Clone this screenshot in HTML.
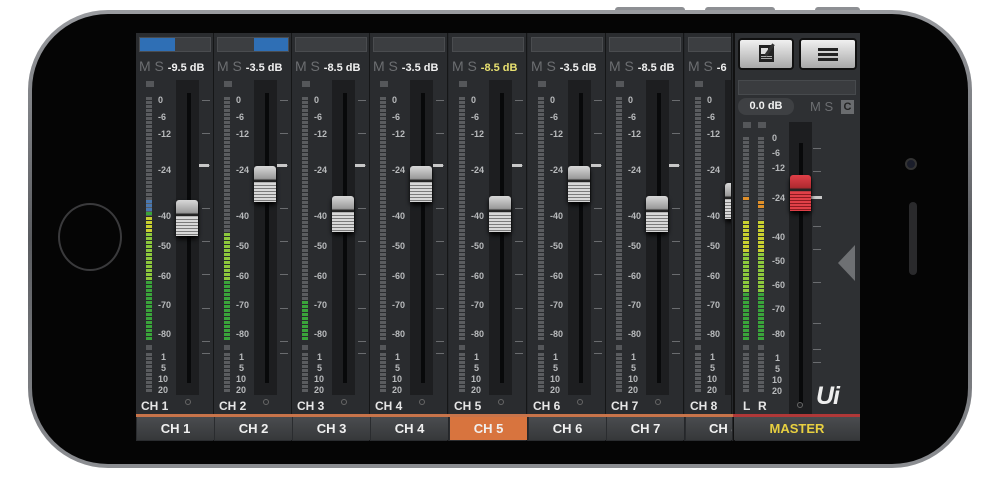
<!DOCTYPE html>
<html><head><meta charset="utf-8"><style>
*{margin:0;padding:0;box-sizing:border-box}
body{width:1000px;height:494px;background:#fff;position:relative;overflow:hidden;font-family:"Liberation Sans",sans-serif}
.a{position:absolute}
.phone{left:28px;top:10px;width:944px;height:458px;border-radius:80px;background:linear-gradient(#9a9ca0,#5a5c60 50%,#8c8e92);}
.phone2{left:32px;top:14px;width:936px;height:450px;border-radius:76px;background:#050505}
.screen{left:136px;top:33px;width:724px;height:408px;background:#25272a}
.ch{top:0;height:408px;width:78px;background:#2a2c2f;border-right:1px solid #151617}
.t{color:#b8babc;font-size:9px;font-weight:bold}
.name{color:#e6e6e6;font-size:12px;font-weight:bold}
.btn{top:384px;height:23px;background:linear-gradient(#4a4c4f,#36383a);color:#f0f0f0;font-size:13px;font-weight:bold;text-align:center;line-height:23px;overflow:hidden;white-space:nowrap}
</style></head><body>
<div class="a" style="left:615px;top:7px;width:70px;height:6px;background:#8d8f93;border-radius:3px"></div>
<div class="a" style="left:705px;top:7px;width:70px;height:6px;background:#8d8f93;border-radius:3px"></div>
<div class="a" style="left:815px;top:7px;width:45px;height:6px;background:#8d8f93;border-radius:3px"></div>
<div class="a phone"></div>
<div class="a phone2"></div>
<div class="a" style="left:58px;top:203px;width:64px;height:68px;border-radius:50%;border:2px solid #3a3a3c"></div>
<div class="a" style="left:905px;top:158px;width:12px;height:12px;border-radius:50%;background:#1a1d2a;border:2px solid #333"></div>
<div class="a" style="left:909px;top:202px;width:8px;height:73px;border-radius:4px;background:#2a2a2c"></div>
<div class="a screen" id="scr"></div>
<script>
var s=document.getElementById('scr');var h='';
var xs=[0,78,156,234,313,392,470,549];
var knob=[167,133,163,133,163,133,163,150];
var dbs=['-9.5 dB','-3.5 dB','-8.5 dB','-3.5 dB','-8.5 dB','-3.5 dB','-8.5 dB','-6'];
var scale=[[0,100],[-6,117],[-12,134],[-24,170],[-40,216],[-50,246],[-60,276],[-70,305],[-80,334]];
function meter(x,top,bot,level,orange){var r='';for(var y=top;y<bot;y+=4){var c='#5a5c5f';if(y>=level){var f=(y-top)/(bot-top);c=f<0.55?'#c8d030':(f<0.75?'#8cc83c':'#3aa43a');}if(orange&&Math.abs(y-orange)<3)c='#e0902a';r+='<div class="a" style="left:'+x+'px;top:'+y+'px;width:6px;height:3px;background:'+c+'"></div>';}return r;}
function knobH(x,y,w,lt,dk,mid){return '<div class="a" style="left:'+x+'px;top:'+y+'px;width:'+w+'px;height:36px;border-radius:3px;box-shadow:0 3px 5px #000;background:linear-gradient('+lt+','+mid+' 35%,#222 40%,#222 44%,'+lt+' 46%,'+lt+' 100%)"></div><div class="a" style="left:'+x+'px;top:'+(y+17)+'px;width:'+w+'px;height:19px;background:repeating-linear-gradient('+lt+' 0 2px,'+dk+' 2px 3px)"></div>';}
for(var i=0;i<8;i++){var x=xs[i];var w=i==7?47:78;
h+='<div class="a ch" style="left:'+x+'px;width:'+w+'px;overflow:hidden">';
h+='<div class="a" style="left:3px;top:4px;width:72px;height:15px;background:#3c3e41;border:1px solid #4a4c4f"></div>';
if(i==0)h+='<div class="a" style="left:4px;top:5px;width:35px;height:13px;background:#2f6fb5"></div>';
if(i==1)h+='<div class="a" style="left:40px;top:5px;width:34px;height:13px;background:#2f6fb5"></div>';
h+='<div class="a" style="left:3px;top:25px;font-size:14px;color:#6c6e71;white-space:nowrap">M S <span style="font-size:11px;font-weight:bold;color:'+(i==4?'#e8e070':'#f0f0f0')+'">'+dbs[i]+'</span></div>';
h+='<div class="a" style="left:10px;top:48px;width:8px;height:6px;background:#55575a"></div>';
var a=i==0?183:(i==1?200:(i==2?265:999));
h+=meter(10,64,308,a).replace(/#c8d030/g,i==2?'#4a78b0':'#c8d030');
if(i==0)h+=meter(10,167,183,0).replace(/#c8d030/g,'#4a78b0');
h+='<div class="a" style="left:10px;top:312px;width:6px;height:5px;background:#55575a"></div>';
h+=meter(10,320,360,999);
for(var k=0;k<scale.length;k++)h+='<div class="a t" style="left:22px;top:'+(scale[k][1]-33-5)+'px">'+scale[k][0]+'</div>';
var lo=[[1,357],[5,368],[10,379],[20,390]];for(k=0;k<4;k++)h+='<div class="a t" style="left:'+(lo[k][0]>=10?22:25)+'px;top:'+(lo[k][1]-38)+'px;line-height:10px">'+lo[k][0]+'</div>';
h+='<div class="a" style="left:40px;top:47px;width:23px;height:315px;background:#1d1e20"></div>';
h+='<div class="a" style="left:51px;top:60px;width:4px;height:290px;background:#08090a"></div>';
[67,100,132,175,208,241,275,308,320].forEach(function(y){h+='<div class="a" style="left:66px;top:'+y+'px;width:8px;height:1px;background:#6a6c6f"></div>';});
h+='<div class="a" style="left:63px;top:131px;width:10px;height:3px;background:#c8c8c8"></div>';
h+=knobH(40,knob[i],22,'#d8d8d8','#7a7a7a','#9a9a9a');
h+='<div class="a" style="left:49px;top:366px;width:6px;height:6px;border-radius:50%;border:1px solid #666"></div>';
h+='<div class="a name" style="left:5px;top:366px">CH '+(i+1)+'</div>';
h+='</div>';
h+='<div class="a" style="left:'+x+'px;top:381px;width:'+(w+1)+'px;height:3px;background:#c8744a"></div>';
h+='<div class="a btn" style="left:'+(x+1)+'px;width:'+(w-1)+'px;'+(i==4?'background:#d8743e;':'')+(i==7?'text-align:left;padding-left:23px;':'')+'">CH '+(i+1)+'</div>';}
var m=597;
h+='<div class="a" style="left:'+m+'px;top:0;width:127px;height:408px;background:#2e3033;border-left:2px solid #111"></div>';
h+='<div class="a" style="left:602px;top:5px;width:56px;height:32px;border-radius:4px;background:linear-gradient(#f0f0f0,#a8a8a8);border:2px solid #111"></div>';
h+='<div class="a" style="left:623px;top:12px;width:15px;height:17px;background:#222"><div class="a" style="left:2px;top:3px;width:7px;height:6px;background:#ddd"></div><div class="a" style="left:2px;top:11px;width:11px;height:1px;background:#aaa"></div><div class="a" style="left:2px;top:13px;width:11px;height:1px;background:#aaa"></div></div>';
h+='<div class="a" style="left:632px;top:10px;width:3px;height:14px;background:#333;transform:rotate(35deg)"></div>';
h+='<div class="a" style="left:663px;top:5px;width:58px;height:32px;border-radius:4px;background:linear-gradient(#f0f0f0,#a8a8a8);border:2px solid #111"></div>';
[15,20,25].forEach(function(y){h+='<div class="a" style="left:682px;top:'+y+'px;width:20px;height:3px;background:#222"></div>';});
h+='<div class="a" style="left:602px;top:47px;width:118px;height:15px;background:#3a3c3f;border:1px solid #474a4d"></div>';
h+='<div class="a" style="left:602px;top:65px;width:56px;height:17px;border-radius:8px;background:#3e4043;color:#f0f0f0;font-size:11px;font-weight:bold;text-align:center;line-height:17px">0.0 dB</div>';
h+='<div class="a" style="left:674px;top:66px;font-size:13px;color:#6c6e71">M S</div><div class="a" style="left:705px;top:67px;width:13px;height:14px;background:#6a6c6f;color:#222;font-size:11px;font-weight:bold;text-align:center;line-height:14px">C</div>';
h+='<div class="a" style="left:607px;top:89px;width:8px;height:6px;background:#55575a"></div><div class="a" style="left:622px;top:89px;width:8px;height:6px;background:#55575a"></div>';
h+=meter(607,104,308,188,165)+meter(622,104,308,188,170);
h+='<div class="a" style="left:607px;top:312px;width:6px;height:5px;background:#55575a"></div><div class="a" style="left:622px;top:312px;width:6px;height:5px;background:#55575a"></div>';
h+=meter(607,320,360,999)+meter(622,320,360,999);
var ms=[[0,106],[-6,121],[-12,136],[-24,166],[-40,205],[-50,229],[-60,253],[-70,277],[-80,302]];
ms.forEach(function(p){h+='<div class="a t" style="left:636px;top:'+(p[1]-6)+'px">'+p[0]+'</div>';});
[[1,326],[5,337],[10,348],[20,359]].forEach(function(p){h+='<div class="a t" style="left:'+(p[0]>=10?636:639)+'px;top:'+(p[1]-6)+'px;line-height:10px">'+p[0]+'</div>';});
h+='<div class="a" style="left:653px;top:89px;width:23px;height:310px;background:#1d1e20"></div><div class="a" style="left:663px;top:110px;width:4px;height:260px;background:#08090a"></div>';
[115,138,193,216,249,290,316,329].forEach(function(y){h+='<div class="a" style="left:677px;top:'+y+'px;width:8px;height:1px;background:#6a6c6f"></div>';});
h+='<div class="a" style="left:675px;top:163px;width:11px;height:3px;background:#c8c8c8"></div>';
h+=knobH(654,142,21,'#e04048','#8a1a20','#b02a30');
h+='<div class="a" style="left:702px;top:212px;width:0;height:0;border-top:18px solid transparent;border-bottom:18px solid transparent;border-right:17px solid #6e7073"></div>';
h+='<div class="a" style="left:680px;top:349px;font-size:25px;font-weight:bold;font-style:italic;color:#eee;letter-spacing:-1px">Ui</div>';
h+='<div class="a" style="left:661px;top:369px;width:6px;height:6px;border-radius:50%;border:1px solid #666"></div>';
h+='<div class="a name" style="left:607px;top:366px">L</div><div class="a name" style="left:622px;top:366px">R</div>';
h+='<div class="a" style="left:597px;top:381px;width:127px;height:3px;background:#b03838"></div>';
h+='<div class="a btn" style="left:598px;width:126px;color:#e8d040">MASTER</div>';
s.innerHTML=h;
</script>
</body></html>
